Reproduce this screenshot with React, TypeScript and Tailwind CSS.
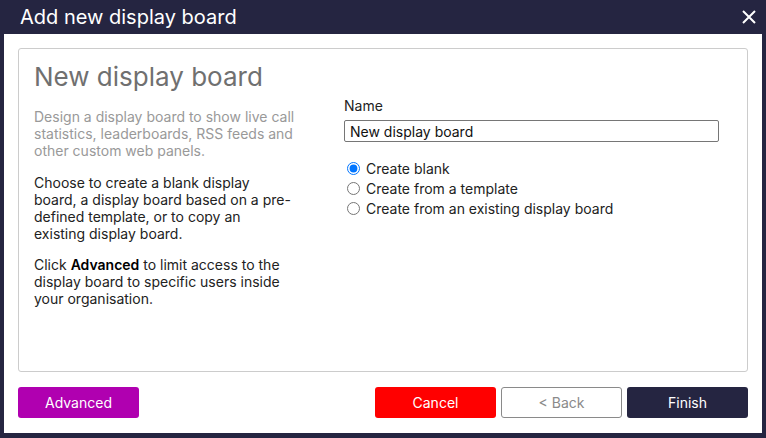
import { FC, useState } from 'react';

const options = [
  { id: 'blank', label: 'Create blank' },
  { id: 'template', label: 'Create from a template' },
  { id: 'copy', label: 'Create from an existing display board' },
];

const CloseIcon: FC = () => (
  <svg width="14" height="14" viewBox="0 0 14 14" fill="none">
    <path d="M1 1L13 13M13 1L1 13" stroke="white" strokeWidth="2" />
  </svg>
);

const App: FC = () => {
  const [name, setName] = useState('New display board');
  const [mode, setMode] = useState('blank');

  return (
    <div className="w-[766px] h-[438px] bg-[#252541] flex flex-col font-['Inter',sans-serif] text-[14px] leading-[17px]">
      {/* title bar */}
      <div className="h-[34px] flex items-center justify-between pl-[20px] pr-[10px]">
        <span className="text-white text-[20px] leading-[24px]">Add new display board</span>
        <button className="w-[14px] h-[14px] flex items-center justify-center">
          <CloseIcon />
        </button>
      </div>

      <div className="mx-[4px] mb-[5px] flex-1 bg-white flex flex-col px-[14px] pt-[14px] pb-[15px]">
        <div className="flex-1 border border-[#cccccc] rounded-[3px] flex pl-[15px] pt-[12px]">
          <div className="w-[262px] flex flex-col">
            <h1 className="text-[26px] leading-[32px] text-[#707070]">New display board</h1>
            <p className="mt-[15px] text-[#999999]">
              Design a display board to show live call statistics, leaderboards, RSS feeds and other custom web panels.
            </p>
            <p className="mt-[15px] max-w-[259px] text-[#222222]">
              Choose to create a blank display board, a display board based on a pre-defined template, or to copy an existing display board.
            </p>
            <p className="mt-[14px] text-[#222222]">
              Click <b className="font-semibold text-black">Advanced</b> to limit access to the display board to specific users inside your organisation.
            </p>
          </div>

          <div className="ml-[48px] mt-[36px] w-[375px] flex flex-col text-[#222222]">
            <label htmlFor="board-name">Name</label>
            <input
              id="board-name"
              value={name}
              onChange={(e) => setName(e.target.value)}
              className="mt-[6px] h-[22px] border border-[#767676] rounded-[2px] px-[5px] text-[14px] text-[#111] outline-none"
            />
            <div className="mt-[16px] flex flex-col">
              {options.map((o) => (
                <label key={o.id} className="h-[20px] flex items-center gap-[6px]">
                  <input
                    type="radio"
                    name="mode"
                    checked={mode === o.id}
                    onChange={() => setMode(o.id)}
                    className="m-0 ml-[3px] w-[13px] h-[13px] accent-[#0075ff]"
                  />
                  <span>{o.label}</span>
                </label>
              ))}
            </div>
          </div>
        </div>

        {/* footer */}
        <div className="mt-[15px] flex justify-between">
          <button className="w-[121px] h-[31px] rounded-[3px] bg-[#b000b0] text-white">Advanced</button>
          <div className="flex gap-[5px]">
            <button className="w-[121px] h-[31px] rounded-[3px] bg-[#ff0000] text-white">Cancel</button>
            <button className="w-[121px] h-[31px] rounded-[3px] border border-[#8a8a8a] text-[#8a8a8a]">&lt; Back</button>
            <button className="w-[121px] h-[31px] rounded-[3px] bg-[#252541] text-white">Finish</button>
          </div>
        </div>
      </div>
    </div>
  );
};

export default App;
